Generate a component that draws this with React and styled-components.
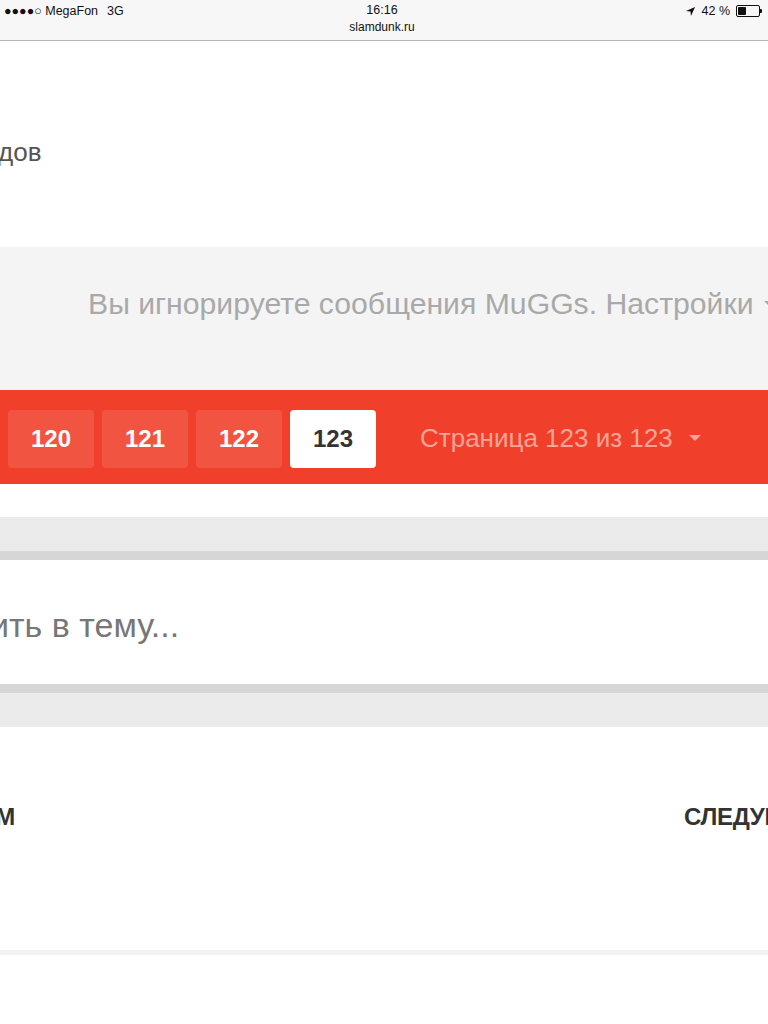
import styled, { createGlobalStyle } from "styled-components";

const Global = createGlobalStyle`
  html, body {
    margin: 0;
    padding: 0;
    background: #fff;
    overflow: hidden;
  }
  body {
    font-family: "Liberation Sans", Arial, sans-serif;
  }
`;

const Page = styled.div`
  width: 768px;
  height: 1024px;
  overflow: hidden;
  background: #fff;
`;

const StatusBar = styled.div`
  height: 40px;
  background: #f7f7f7;
  border-bottom: 1px solid #b4b4b4;
  display: grid;
  grid-template-columns: 1fr auto 1fr;
  padding: 0 8px 0 4px;
  font-size: 12.5px;
  color: #111;
`;

const StatusLeft = styled.div`
  display: flex;
  align-items: flex-start;
  padding-top: 4px;
  gap: 9px;
  white-space: pre;
`;

const StatusCenter = styled.div`
  display: flex;
  flex-direction: column;
  align-items: center;
  padding-top: 3px;
  gap: 3px;
  font-size: 12px;
`;

const StatusRight = styled.div`
  display: flex;
  justify-content: flex-end;
  align-items: flex-start;
  padding-top: 4px;
  gap: 6px;
`;

const Battery = styled.div`
  width: 20px;
  height: 8px;
  border: 1px solid #111;
  border-radius: 2px;
  padding: 1px;
  margin-top: 1px;
  position: relative;
  &::before {
    content: "";
    display: block;
    width: 40%;
    height: 100%;
    background: #111;
    border-radius: 1px;
  }
  &::after {
    content: "";
    position: absolute;
    right: -3px;
    top: 3px;
    width: 2px;
    height: 4px;
    background: #111;
    border-radius: 0 1px 1px 0;
  }
`;

const IntroBlock = styled.div`
  height: 206px;
  display: flex;
  align-items: center;
`;

const IntroText = styled.div`
  font-size: 26px;
  color: #555;
  margin-left: -2px;
  margin-top: 16px;
`;

const IgnoreBand = styled.div`
  height: 143px;
  box-sizing: border-box;
  background: #f4f4f4;
  display: flex;
  align-items: center;
  padding-left: 88px;
  padding-bottom: 30px;
  white-space: nowrap;
  font-size: 30.2px;
  color: #a9a9a9;
  gap: 10px;
`;

const Caret = styled.span`
  display: inline-block;
  width: 0;
  height: 0;
  border-left: ${(p) => p.$size}px solid transparent;
  border-right: ${(p) => p.$size}px solid transparent;
  border-top: ${(p) => p.$size}px solid ${(p) => p.$color};
  flex-shrink: 0;
`;

const PageNav = styled.div`
  height: 94px;
  background: #f0402b;
  display: flex;
  align-items: center;
  white-space: nowrap;
`;

const PageButtons = styled.div`
  display: flex;
  gap: 8px;
  margin-left: -86px;
  margin-top: 3px;
`;

const PageButton = styled.div`
  width: 86px;
  height: 58px;
  border-radius: 4px;
  display: flex;
  align-items: center;
  justify-content: center;
  font-size: 24px;
  font-weight: 700;
  background: ${(p) => (p.$active ? "#fff" : "#f25442")};
  color: ${(p) => (p.$active ? "#333" : "#fff")};
  flex-shrink: 0;
`;

const PageInfo = styled.div`
  margin-left: 44px;
  margin-top: 2px;
  display: flex;
  align-items: center;
  gap: 16px;
  font-size: 26px;
  color: #f9a497;
`;

const Spacer = styled.div`
  height: ${(p) => p.$h}px;
  background: ${(p) => p.$bg};
`;

const ReplyBox = styled.div`
  height: 124px;
  display: flex;
  align-items: center;
  white-space: nowrap;
`;

const ReplyText = styled.div`
  font-size: 34px;
  color: #777;
  margin-left: -103px;
  margin-top: 6px;
`;

const BottomNav = styled.div`
  height: 223px;
  display: flex;
  justify-content: space-between;
  align-items: flex-start;
  padding-top: 76px;
  box-sizing: border-box;
  white-space: nowrap;
  overflow: hidden;
`;

const NavLink = styled.div`
  font-size: 24px;
  font-weight: 700;
  color: #333;
  letter-spacing: -0.3px;
  margin-left: ${(p) => p.$ml || 0}px;
  margin-right: ${(p) => p.$mr || 0}px;
`;

const Arrow = () => (
  <svg width="11" height="11" viewBox="0 0 12 12" style={{ marginTop: 2 }}>
    <path d="M11 1 L1 5.5 L6 6 L6.5 11 Z" fill="#111" />
  </svg>
);

export default function App() {
  return (
    <Page>
      <Global />
      <StatusBar>
        <StatusLeft>
          <span>●●●●○ MegaFon</span>
          <span>3G</span>
        </StatusLeft>
        <StatusCenter>
          <span style={{ fontSize: 12.5 }}>16:16</span>
          <span>slamdunk.ru</span>
        </StatusCenter>
        <StatusRight>
          <Arrow />
          <span>42 %</span>
          <Battery />
        </StatusRight>
      </StatusBar>

      <IntroBlock>
        <IntroText>дов</IntroText>
      </IntroBlock>

      <IgnoreBand>
        <span>Вы игнорируете сообщения MuGGs. Настройки</span>
        <Caret $size={6} $color="#a9a9a9" />
      </IgnoreBand>

      <PageNav>
        <PageButtons>
          {["119", "120", "121", "122", "123"].map((n) => (
            <PageButton key={n} $active={n === "123"}>
              {n}
            </PageButton>
          ))}
        </PageButtons>
        <PageInfo>
          <span>Страница 123 из 123</span>
          <Caret $size={6} $color="#f9a497" />
        </PageInfo>
      </PageNav>

      <Spacer $h={33} $bg="#fff" />
      <Spacer $h={34} $bg="#ebebeb" />
      <Spacer $h={9} $bg="#d6d6d6" />
      <ReplyBox>
        <ReplyText>Ответить в тему...</ReplyText>
      </ReplyBox>
      <Spacer $h={9} $bg="#d6d6d6" />
      <Spacer $h={34} $bg="#ebebeb" />

      <BottomNav>
        <NavLink $ml={-166}>ПРЕДЫДУЩИМ</NavLink>
        <NavLink $mr={-79}>СЛЕДУЮЩАЯ</NavLink>
      </BottomNav>
      <Spacer $h={5} $bg="#f2f2f2" />
    </Page>
  );
}
